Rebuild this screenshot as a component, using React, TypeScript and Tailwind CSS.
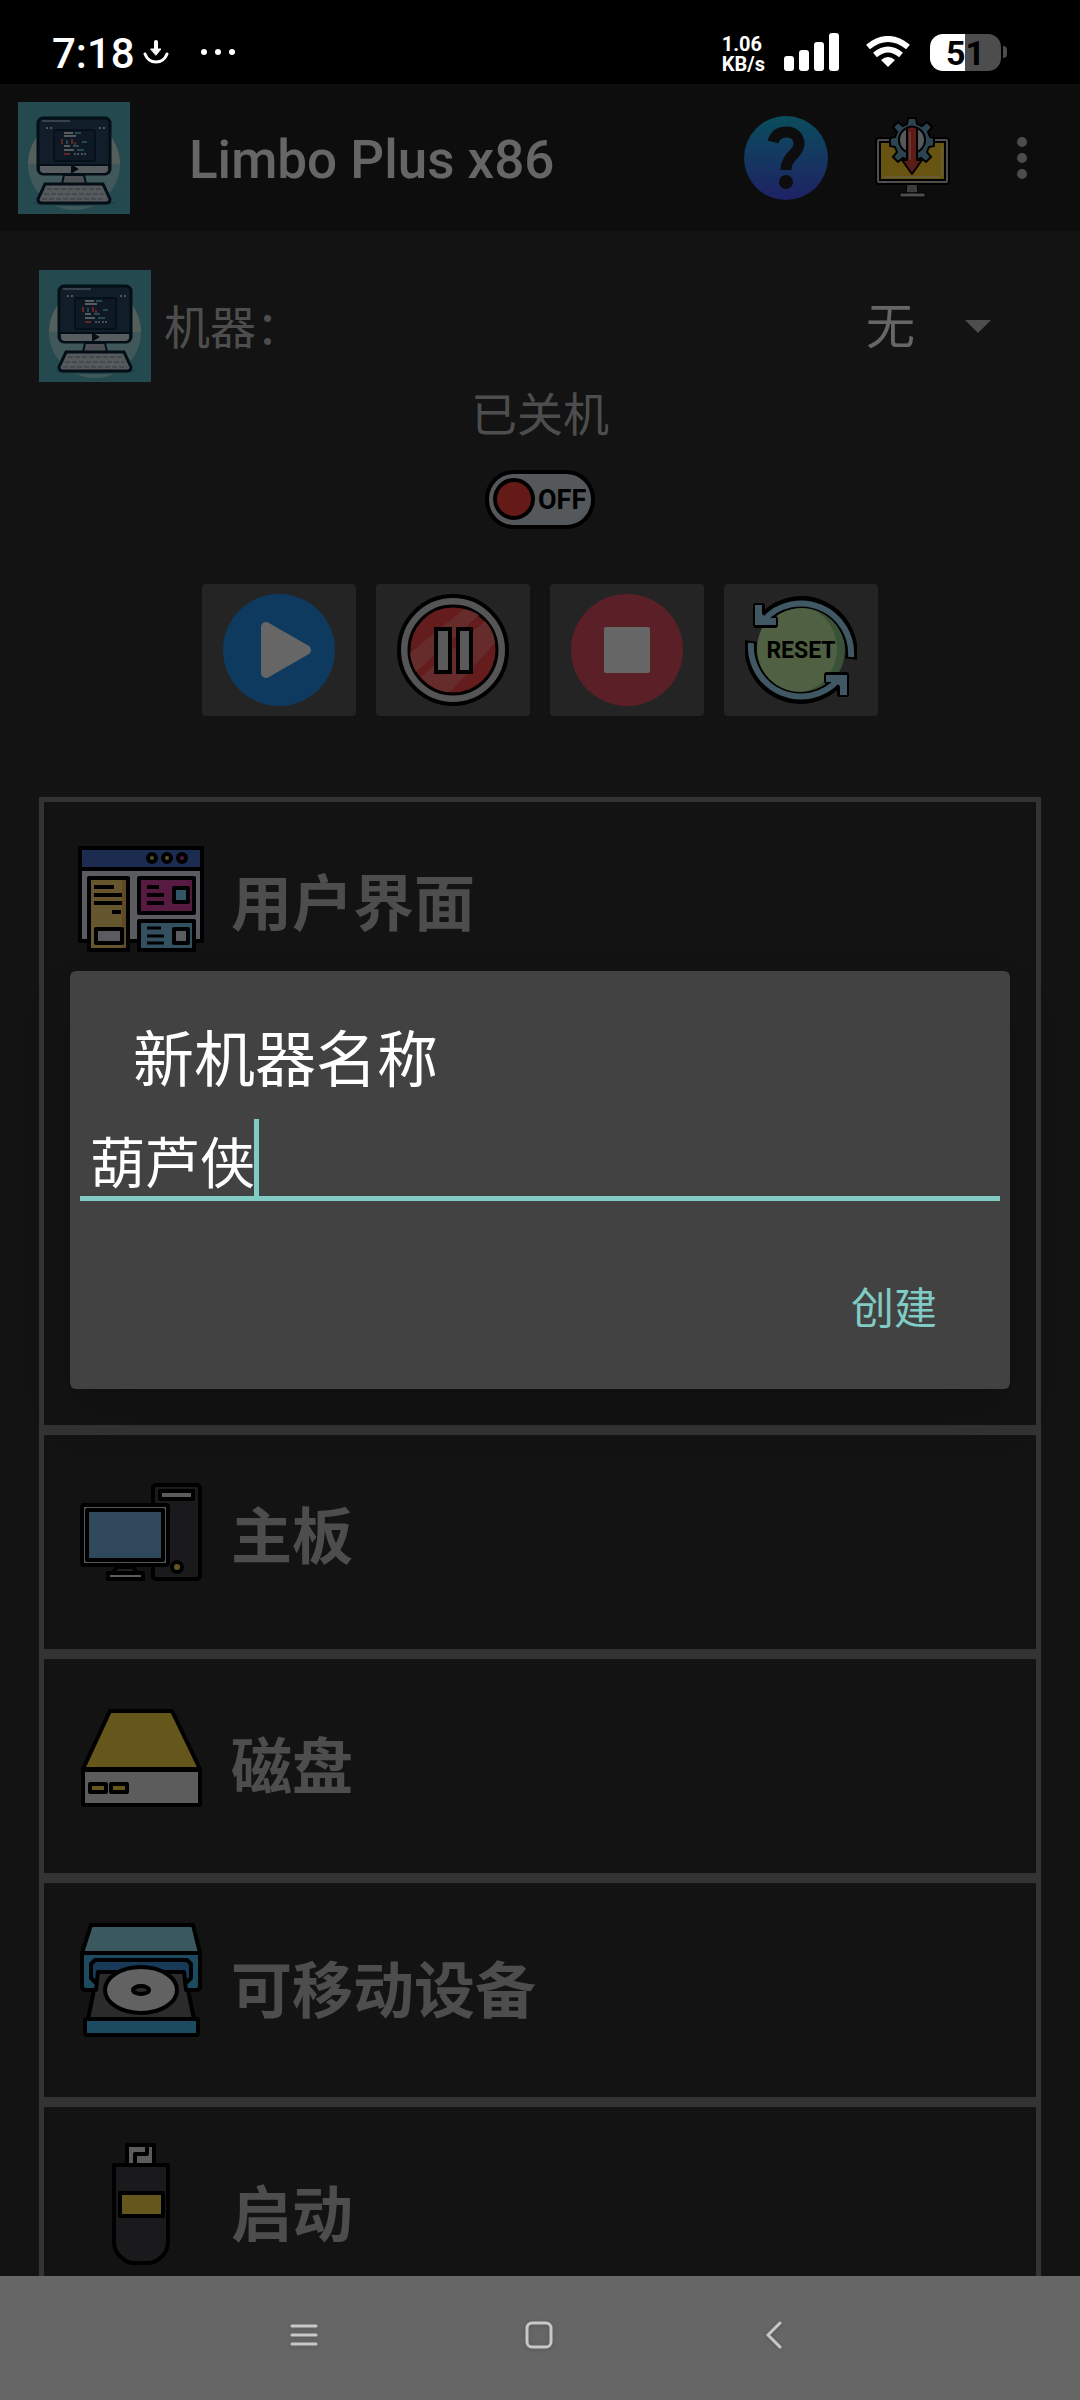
import React, { useState } from 'react';

// --- App logo: retro computer on a teal tile ---
const LogoIcon = () => (
  <svg className="w-28 h-28 shrink-0" viewBox="0 0 112 112" aria-hidden="true">
    <rect width="112" height="112" fill="#5ab9c8" />
    <path d="M10 62a46 46 0 1 1 92 0z" fill="#d2eee4" />
    <path d="M10 62a46 46 0 0 0 92 0z" fill="#a0dbe0" />
    <ellipse cx="56" cy="101" rx="41" ry="3" fill="#48a3b4" />
    <rect x="20" y="16" width="72" height="56" rx="5" fill="#2c4a68" stroke="#08233a" strokeWidth="3" />
    <path d="M22 62h68v5q0 4-4 4H26q-4 0-4-4z" fill="#dfe6ec" />
    <path d="M20 63h72" stroke="#08233a" strokeWidth="2" />
    <path d="M24 19h28" stroke="#8aa4b8" strokeWidth="2" />
    <path d="M54 64v6l5-3z" stroke="#08233a" strokeWidth="2" fill="#08233a" />
    <rect x="36" y="28" width="41" height="31" rx="2" fill="#27405c" stroke="#0b2a42" strokeWidth="2" />
    <path d="M28 26h2M32 26h2M81 26h2M85 26h2" stroke="#c9d6e0" strokeWidth="2" />
    <path d="M46 31h9M46 34h12M46 44h6M46 48h10" stroke="#d6e4ea" strokeWidth="2" />
    <path d="M57 31h6M55 44h6M59 48h7M49 38v4M64 40h5" stroke="#5ab9c8" strokeWidth="2" />
    <path d="M44 37v5M54 37v5M57 40v3M46 52h6" stroke="#f0645c" strokeWidth="2" />
    <path d="M56 52h5M63 52h6" stroke="#9fd3dc" strokeWidth="2" strokeDasharray="2 1" />
    <path d="M46 73h20l2 9H44z" fill="#bcc6d2" stroke="#08233a" strokeWidth="2" />
    <path d="M27 82h58l7 15q0 4-4 4H24q-4 0-4-4z" fill="#d8e0e6" stroke="#08233a" strokeWidth="3" />
    <path d="M29 87h54M26 92h60M24 97h64" stroke="#8194a5" strokeWidth="1" strokeDasharray="5 2" />
  </svg>
);

const HelpIcon = () => (
  <svg className="w-[84px] h-[84px]" viewBox="0 0 84 84" aria-hidden="true">
    <defs>
      <linearGradient id="helpFill" x1="0" y1="0" x2="0" y2="1">
        <stop offset="0" stopColor="#1cc0e8" />
        <stop offset="1" stopColor="#4c54fa" />
      </linearGradient>
    </defs>
    <circle cx="42" cy="42" r="42" fill="url(#helpFill)" />
    <path d="M29 26c2-8 8-10 14-10 8 0 12 6 12 12 0 10-13 12-13 26" fill="none" stroke="#212121" strokeWidth="11" />
    <circle cx="42" cy="66" r="7" fill="#212121" />
  </svg>
);

const InstallIcon = () => (
  <svg className="w-[84px] h-[84px]" viewBox="0 0 84 84" aria-hidden="true">
    <path d="M37 68h10l1 9H36z" fill="#9a9a9a" stroke="#000" strokeWidth="1" />
    <rect x="30" y="77" width="25" height="4" rx="1" fill="#c3c3c3" stroke="#000" strokeWidth="1" />
    <rect x="6" y="22" width="73" height="46" rx="3" fill="#c3c3c3" stroke="#000" strokeWidth="2" />
    <rect x="10" y="26" width="65" height="38" fill="#ffd228" stroke="#000" strokeWidth="2" />
    <path d="M14 61h56M72 30v30" stroke="#ffe889" strokeWidth="2" />
    <g fill="#6ea8c8" stroke="#000" strokeWidth="2">
      <path d="M38 2h8l1 6 5 2 5-4 5 5-4 5 2 5 4 1v8l-5 1-2 5 4 5-5 5-5-4-5 2h-8l-5-2-5 4-5-5 4-5-2-5-5-1v-8l5-1 2-5-4-5 5-5 5 4 4-2z" />
      <circle cx="42" cy="24" r="13" fill="#d9dde0" />
    </g>
    <path d="M37 12q5-3 10 0v32h5L42 58 32 44h5z" fill="#e64a3c" stroke="#000" strokeWidth="2" strokeLinejoin="round" />
    <path d="M40 16v28" stroke="#f59085" strokeWidth="2" />
  </svg>
);

const MoreIcon = () => (
  <svg className="w-[52px] h-[84px]" viewBox="0 0 52 84" fill="#bdbdbd" aria-hidden="true">
    <circle cx="26" cy="26" r="5" />
    <circle cx="26" cy="42" r="5" />
    <circle cx="26" cy="58" r="5" />
  </svg>
);

const OffIcon = () => (
  <svg className="w-28 h-28" viewBox="0 0 112 112" role="img" aria-label="OFF">
    <rect x="3" y="28" width="106" height="55" rx="27" fill="#d2dce4" stroke="#000" strokeWidth="4" />
    <circle cx="30" cy="55" r="19" fill="#fa4139" stroke="#000" strokeWidth="4" />
    <text x="54" y="65" fontSize="27" fontWeight="700" fontFamily="Roboto, sans-serif">OFF</text>
  </svg>
);

// --- Machine control buttons ---
const PlayIcon = () => (
  <svg className="w-28 h-28" viewBox="0 0 112 112" aria-hidden="true">
    <circle cx="56" cy="56" r="56" fill="#2391ee" />
    <path d="M43 33v46l40-23z" fill="#fff" stroke="#fff" strokeWidth="10" strokeLinejoin="round" />
  </svg>
);

const PauseIcon = () => (
  <svg className="w-28 h-28" viewBox="0 0 112 112" aria-hidden="true">
    <circle cx="56" cy="56" r="54" fill="#d4d4d4" stroke="#000" strokeWidth="4" />
    <circle cx="56" cy="56" r="44" fill="#fa4646" stroke="#000" strokeWidth="3" />
    <path d="M13 59 67 15q9 2 15 6L19 78q-5-9-6-19zM24 83 88 27q9 10 10 22L53 98q-16 0-29-15z" fill="#ff6e6e" />
    <rect x="39" y="35" width="14" height="43" fill="#e0e0e0" stroke="#000" strokeWidth="4" />
    <rect x="61" y="35" width="13" height="43" fill="#e0e0e0" stroke="#000" strokeWidth="4" />
  </svg>
);

const StopIcon = () => (
  <svg className="w-28 h-28" viewBox="0 0 112 112" aria-hidden="true">
    <circle cx="56" cy="56" r="56" fill="#e35262" />
    <rect x="33" y="33" width="46" height="46" rx="2" fill="#fff" />
  </svg>
);

const ResetArrow = () => (
  <g>
    <path d="M19 25A50 50 0 0 1 106 65" fill="none" stroke="#000" strokeWidth="12" />
    <path d="M11 12h6v8l3 3h-1l3 2h8v6H11z" fill="#000" stroke="#000" strokeWidth="6" strokeLinejoin="round" />
    <path d="M19 26A50 50 0 0 1 106 63" fill="none" stroke="#9ddcf8" strokeWidth="6" />
    <path d="M10 11h7v9l5 4h9v7H10z" fill="#9ddcf8" />
  </g>
);

const ResetIcon = () => (
  <svg className="w-28 h-28" viewBox="0 0 112 112" aria-hidden="true">
    <circle cx="56" cy="56" r="44" fill="#8fcb8a" />
    <ellipse cx="52" cy="55" rx="40" ry="43" fill="#c5f2a5" />
    <ResetArrow />
    <g transform="rotate(180 56 56)">
      <ResetArrow />
    </g>
    <text x="56" y="64" fontSize="23" fontWeight="700" fontFamily="Roboto, sans-serif" textAnchor="middle">RESET</text>
  </svg>
);

// --- Section icons ---
const InterfaceIcon = () => (
  <svg viewBox="0 0 126 126" stroke="#000" strokeWidth="4" strokeLinejoin="round" aria-hidden="true">
    <path d="M2 12h122v93H2z" fill="#e1e6f5" />
    <path d="M2 12h122v21H2z" fill="#466ec8" />
    <g strokeWidth="4">
      <circle cx="74" cy="22" r="4" fill="#c8d060" />
      <circle cx="89" cy="22" r="4" fill="#fdd773" />
      <circle cx="104" cy="22" r="4" fill="#da44a5" />
    </g>
    <path d="M11 42h39v72H11z" fill="#fdd773" />
    <path d="M46 44v68" stroke="#eeb957" />
    <path d="M18 93h26v14H18z" fill="#e1e6f5" />
    <path d="M16 51h20M16 59h28M16 67h28M34 76h9" />
    <path d="M61 42h55v35H61z" fill="#da44a5" />
    <path d="M96 52h14v14H96z" fill="#80d7ff" />
    <path d="M69 51h12M69 59h17M69 67h17" />
    <path d="M61 85h55v29H61z" fill="#80c8ec" />
    <path d="M96 93h14v14H96z" fill="#e1e6f5" />
    <path d="M69 92h14M69 100h17M69 107h17" strokeWidth="3" />
  </svg>
);

const BoardIcon = () => (
  <svg viewBox="0 0 126 126" stroke="#000" strokeWidth="4" strokeLinejoin="round" aria-hidden="true">
    <rect x="75" y="16" width="47" height="94" rx="3" fill="#414146" />
    <rect x="82" y="22" width="33" height="8" fill="#e6e6e6" />
    <circle cx="99" cy="98" r="5" fill="#fcd948" strokeWidth="4" />
    <path d="M39 98h16l4 6H35z" fill="#505058" />
    <rect x="30" y="104" width="35" height="6" fill="#e6e6e6" />
    <rect x="4" y="36" width="86" height="60" rx="2" fill="#d4d4d4" />
    <rect x="9" y="41" width="76" height="50" fill="#78b6e1" />
  </svg>
);

const DiskIcon = () => (
  <svg viewBox="0 0 126 126" stroke="#000" strokeWidth="4" strokeLinejoin="round" aria-hidden="true">
    <path d="M32 18h62l28 58H5z" fill="#fcd948" />
    <rect x="5" y="77" width="117" height="35" rx="1" fill="#e6e6e6" />
    <rect x="12" y="91" width="16" height="8" fill="#fcd948" />
    <rect x="33" y="91" width="16" height="8" fill="#fcd948" />
  </svg>
);

const RemovableIcon = () => (
  <svg viewBox="0 0 126 126" stroke="#000" strokeWidth="4" strokeLinejoin="round" aria-hidden="true">
    <path d="M4 36h118v33q0 4-4 4H8q-4 0-4-4z" fill="#48b9eb" />
    <path d="M13 8h102l7 28H4z" fill="#8fdcf0" />
    <path d="M17 43h92l4 4v14l-4 4H17l-4-4V47z" fill="#3c91dc" />
    <path d="M20 55h86l2 18h2l6 29H10l6-29h2z" fill="#6b6b6b" />
    <ellipse cx="63" cy="73" rx="36" ry="23" fill="#f5f5f5" />
    <ellipse cx="63" cy="73" rx="8" ry="4" fill="#6b6b6b" />
    <rect x="7" y="102" width="113" height="16" rx="2" fill="#48b9eb" />
  </svg>
);

const BootIcon = () => (
  <svg viewBox="0 0 126 126" stroke="#000" strokeWidth="4" strokeLinejoin="round" aria-hidden="true">
    <path d="M49 4h27v20H49z" fill="#e6e6e6" />
    <path d="M69 6v7H57v10" fill="none" />
    <path d="M36 24h54v77q0 10-8 16-5 5-12 5H56q-7 0-12-5-8-6-8-16z" fill="#414146" />
    <path d="M42 52h43v23H42z" fill="#fcd948" />
  </svg>
);

// --- Status bar of the phone ---
const StatusBar = () => (
  <div className="h-[84px] shrink-0 bg-black text-white flex items-center justify-between pl-[52px] pr-[73px] pt-5">
    <div className="flex items-center">
      <span className="pt-1 text-[42px] leading-[60px] font-medium">7:18</span>
      <svg className="w-7 h-7 ml-[7px]" viewBox="0 0 28 28" fill="none" stroke="#fff" strokeWidth="4" strokeLinecap="round" aria-hidden="true">
        <path d="M14 4v8" />
        <path d="M9 11h10l-5 6z" fill="#fff" strokeWidth="1" strokeLinejoin="round" />
        <path d="M3 16q3 8 11 8t11-8" strokeWidth="3" />
      </svg>
      <svg className="w-9 h-7 ml-[30px]" viewBox="0 0 36 28" fill="#fff" aria-hidden="true">
        <circle cx="4" cy="14" r="3" />
        <circle cx="18" cy="14" r="3" />
        <circle cx="32" cy="14" r="3" />
      </svg>
    </div>
    <div className="flex items-center">
      <div className="pt-1 text-xl leading-5 font-bold">
        <p>1.06</p>
        <p>KB/s</p>
      </div>
      <svg className="w-14 h-10 ml-[19px]" viewBox="0 0 56 40" fill="#fff" aria-hidden="true">
        <rect x="0" y="24" width="10" height="15" rx="3" />
        <rect x="15" y="18" width="10" height="21" rx="3" />
        <rect x="30" y="10" width="10" height="29" rx="3" />
        <rect x="45" y="1" width="10" height="38" rx="3" />
      </svg>
      <svg className="w-11 h-8 ml-[26px]" viewBox="0 0 44 32" fill="none" stroke="#fff" strokeWidth="6" aria-hidden="true">
        <path d="M2 11q20-16 40 0" />
        <path d="M9 19q13-11 26 0" />
        <path d="M22 31l-7-7q7-6 14 0z" fill="#fff" stroke="none" />
      </svg>
      <div className="flex items-center ml-5">
        <div className="w-[71px] h-[37px] rounded-[13px] bg-linear-to-r from-white from-50% to-[#4d4d4d] to-50% text-black text-[34px] leading-[38px] font-bold text-center">
          51
        </div>
        <div className="w-1 h-3 ml-0.5 rounded-r-full bg-[#4d4d4d]" />
      </div>
    </div>
  </div>
);

const controls = [
  { name: '启动机器', Icon: PlayIcon },
  { name: '暂停', Icon: PauseIcon },
  { name: '停止', Icon: StopIcon },
  { name: '重置', Icon: ResetIcon },
];

const sections = [
  { title: '用户界面', Icon: InterfaceIcon, height: 'h-[633px]', titlePad: 'pt-6' },
  { title: '主板', Icon: BoardIcon, height: 'h-56', titlePad: 'pt-6' },
  { title: '磁盘', Icon: DiskIcon, height: 'h-56', titlePad: 'pt-[30px]' },
  { title: '可移动设备', Icon: RemovableIcon, height: 'h-56', titlePad: 'pt-[30px]' },
  { title: '启动', Icon: BootIcon, height: 'h-56', titlePad: 'pt-[30px]' },
];

// --- Dialog asking for the new machine's name ---
const NewMachineDialog = () => {
  const [name, setName] = useState('葫芦侠');

  return (
    <div className="absolute inset-0 flex items-center bg-black/60 px-[70px]">
      <form
        role="dialog"
        aria-labelledby="dialog-title"
        onSubmit={(e) => e.preventDefault()}
        className="w-full rounded-md bg-[#424242] pt-12 pb-5 shadow-2xl"
      >
        <h2 id="dialog-title" className="px-[63px] text-[61px] leading-[84px] text-white">
          <label htmlFor="machine-name">新机器名称</label>
        </h2>
        <div className="relative mx-2.5">
          <input
            id="machine-name"
            type="text"
            value={name}
            onChange={(e) => setName(e.target.value)}
            className="block w-full h-[98px] pt-[18px] px-2.5 border-b-[5px] border-[#80cbc4] text-[55px] text-white caret-[#80cbc4] outline-none"
          />
          <span className="absolute left-[174px] bottom-[5px] w-[5px] h-[77px] bg-[#80cbc4]" />
        </div>
        <div className="flex justify-end mt-12 pr-[29px]">
          <button type="submit" className="h-[120px] px-11 text-[43px] text-[#80cbc4]">
            创建
          </button>
        </div>
      </form>
    </div>
  );
};

const NavigationBar = () => (
  <nav className="h-[124px] shrink-0 bg-[#666] flex items-center justify-center pr-[3px] pb-1">
    <button aria-label="最近任务" className="w-[235px] flex justify-center">
      <svg className="w-8 h-8 drop-shadow-sm" viewBox="0 0 32 32" stroke="#c8c8c8" strokeWidth="3" strokeLinecap="round" aria-hidden="true">
        <path d="M4 6h24M4 15h24M4 24h24" />
      </svg>
    </button>
    <button aria-label="主屏幕" className="w-[235px] flex justify-center">
      <svg className="w-8 h-8 drop-shadow-sm" viewBox="0 0 32 32" fill="none" stroke="#c8c8c8" strokeWidth="3" aria-hidden="true">
        <rect x="4" y="3" width="24" height="24" rx="5" />
      </svg>
    </button>
    <button aria-label="返回" className="w-[235px] flex justify-center">
      <svg className="w-8 h-8 drop-shadow-sm" viewBox="0 0 32 32" fill="none" stroke="#c8c8c8" strokeWidth="3" strokeLinecap="round" strokeLinejoin="round" aria-hidden="true">
        <path d="M22 3 10 15l12 12" />
      </svg>
    </button>
  </nav>
);

export default function App() {
  return (
    <div className="h-screen flex flex-col overflow-hidden bg-[#303030] font-['Roboto','Noto_Sans_CJK_SC',sans-serif]">
      <StatusBar />

      <div className="relative flex-1 min-h-0 flex flex-col">
        <header className="h-[147px] shrink-0 bg-[#212121] flex items-center pl-[18px] pr-8">
          <LogoIcon />
          <h1 className="flex-1 ml-[59px] pt-1 text-[53px] leading-[64px] font-medium text-white">Limbo Plus x86</h1>
          <div className="flex items-center gap-[42px]">
            <button aria-label="帮助"><HelpIcon /></button>
            <button aria-label="安装"><InstallIcon /></button>
            <button aria-label="更多"><MoreIcon /></button>
          </div>
        </header>

        <main className="flex-1 min-h-0 overflow-hidden px-[39px] pt-[39px]">
          <div className="flex items-center">
            <LogoIcon />
            <label htmlFor="machine" className="flex-1 ml-[13px] pt-1 text-[46px] leading-[64px] text-[#c1c1c1]">机器：</label>
            <div className="relative w-[175px]">
              <select id="machine" className="w-full pt-1 appearance-none bg-transparent text-[49px] leading-[64px] text-white">
                <option>无</option>
              </select>
              <svg className="absolute right-[50px] top-7 w-[26px] h-[13px] pointer-events-none" viewBox="0 0 26 13" fill="#c1c1c1" aria-hidden="true">
                <path d="M0 0h26L13 13z" />
              </svg>
            </div>
          </div>

          <p className="pt-1 text-center text-[46px] leading-[58px] text-[#c1c1c1]">已关机</p>
          <div className="flex justify-center">
            <OffIcon />
          </div>

          <div className="flex justify-center gap-5 mt-7">
            {controls.map(({ name, Icon }) => (
              <button key={name} aria-label={name} className="w-[154px] h-[132px] rounded bg-[#5a5a5a] flex items-center justify-center">
                <Icon />
              </button>
            ))}
          </div>

          <div className="mt-[81px]">
            {sections.map(({ title, Icon, height, titlePad }) => (
              <section key={title} className={`${height} border-[5px] border-[#808080] flex items-start gap-[27px] pl-[34px] pt-[34px]`}>
                <div className="w-[126px] h-[126px] shrink-0">
                  <Icon />
                </div>
                <h2 className={`${titlePad} text-[61px] leading-[90px] font-bold text-[#c1c1c1]`}>{title}</h2>
              </section>
            ))}
          </div>
        </main>

        <NewMachineDialog />
      </div>

      <NavigationBar />
    </div>
  );
}
